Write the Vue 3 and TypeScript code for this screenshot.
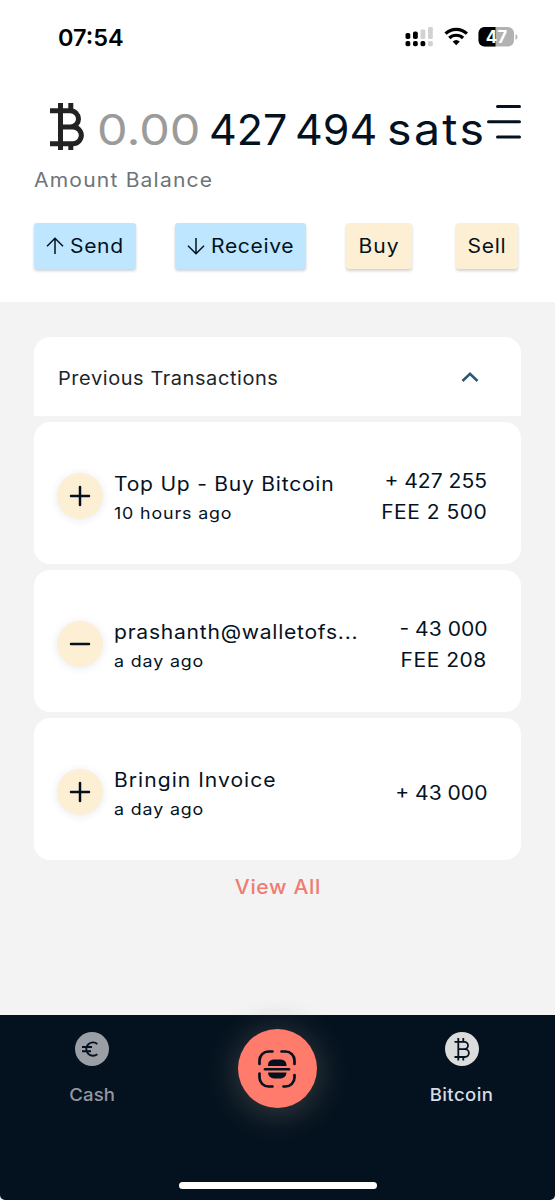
<script setup lang="ts">
interface Transaction {
  id: number
  kind: 'in' | 'out'
  title: string
  time: string
  amount: string
  fee?: string
}

const transactions: Transaction[] = [
  { id: 1, kind: 'in', title: 'Top Up - Buy Bitcoin', time: '10 hours ago', amount: '+ 427 255', fee: 'FEE 2 500' },
  { id: 2, kind: 'out', title: 'prashanth@walletofs...', time: 'a day ago', amount: '- 43 000', fee: 'FEE 208' },
  { id: 3, kind: 'in', title: 'Bringin Invoice', time: 'a day ago', amount: '+ 43 000' },
]
</script>

<template>
  <div class="screen">
    <header class="top">
      <div class="status">
        <span class="clock">07:54</span>
        <svg class="status-icons" width="114" height="24" viewBox="0 0 114 24">
          <g fill="#000">
            <rect x="0.5" y="8" width="4.8" height="6" rx="1.8" />
            <rect x="8" y="6.5" width="4.8" height="7.5" rx="1.8" />
            <rect x="0.5" y="16" width="4.8" height="5.3" rx="1.8" />
            <rect x="8" y="16" width="4.8" height="5.3" rx="1.8" />
            <rect x="15.5" y="16" width="4.8" height="5.3" rx="1.8" />
          </g>
          <g fill="#d2d2d2">
            <rect x="15.5" y="4.5" width="4.8" height="9.5" rx="1.2" />
            <rect x="23" y="2" width="4.8" height="12" rx="1.2" />
            <rect x="23" y="16" width="4.8" height="5.3" rx="1.2" />
          </g>
          <g fill="none" stroke="#000" stroke-width="3.2">
            <path d="M40.5 8.6a15.5 15.5 0 0 1 21.400 0" />
            <path d="M44.3 13a10 10 0 0 1 13.800 0" />
          </g>
          <path d="M51.200 20.200l-3.600-3.700a5.400 5.400 0 0 1 7.200 0z" fill="#000" />
          <rect x="73.500" y="2" width="35.500" height="19.500" rx="6" fill="#b2b2b2" />
          <path d="M79.500 2H90.500V21.500H79.500a6 6 0 0 1-6-6V8a6 6 0 0 1 6-6z" fill="#000" />
          <path d="M110.500 9.200q2 .8 2 2.800t-2 2.800z" fill="#b2b2b2" />
          <text x="91.500" y="17.700" text-anchor="middle" class="battery-text">47</text>
        </svg>
      </div>

      <div class="balance">
        <svg class="coin" width="36" height="48" viewBox="0 0 36 48" fill="none" stroke="#222" stroke-width="5">
          <path d="M1 7.800H21.400a8.100 8.100 0 0 1 0 16.200H11.500M21.400 24H24a8.350 8.350 0 0 1 0 16.700H1M11.500 7.800V40.700" />
          <path d="M11.500 0V8M21.800 0V8M11.500 41V47M21.800 41V47" />
        </svg>
        <div class="zeros"><span class="wide">0.00</span></div>
        <div class="n1">427</div>
        <div class="n2">494</div>
        <div class="unit"><span class="wide">sats</span></div>
        <svg class="menu" width="36" height="38" viewBox="0 0 36 38" stroke="#04121f" stroke-width="3" stroke-linecap="round">
          <path d="M11.500 2.500H33.500M2.500 17.800H33.500M11.500 33H33.500" />
        </svg>
      </div>
      <div class="caption"><span class="wide">Amount Balance</span></div>

      <div class="actions">
        <button class="btn blue send">
          <svg width="18" height="18" viewBox="0 0 18 18"><path d="M9 17V1.500M1 9.300L9 1.300L17 9.300" /></svg>
          <span class="wide">Send</span>
        </button>
        <button class="btn blue receive">
          <svg width="18" height="18" viewBox="0 0 18 18"><path d="M9 1V16.500M1 8.700L9 16.700L17 8.700" /></svg>
          <span class="wide">Receive</span>
        </button>
        <button class="btn cream buy"><span class="wide">Buy</span></button>
        <button class="btn cream sell"><span class="wide">Sell</span></button>
      </div>
    </header>

    <main class="content">
      <div class="list-head">
        <span class="wide">Previous Transactions</span>
        <svg width="18" height="12" viewBox="0 0 18 12" fill="none" stroke="#2f5877" stroke-width="2.600">
          <path d="M1.500 9L9 1.800L16.500 9" />
        </svg>
      </div>
      <article v-for="t in transactions" :key="t.id" class="card">
        <div class="badge">
          <svg width="22" height="22" viewBox="0 0 22 22" stroke="#04121f" stroke-width="2.500" stroke-linecap="round">
            <path :d="t.kind === 'in' ? 'M2 11H20M11 2V20' : 'M2 11H20'" />
          </svg>
        </div>
        <div class="info">
          <div class="title"><span class="wide">{{ t.title }}</span></div>
          <div class="time"><span class="wide">{{ t.time }}</span></div>
        </div>
        <div class="amounts">
          <div class="amount"><span class="wide">{{ t.amount }}</span></div>
          <div v-if="t.fee" class="fee"><span class="wide">{{ t.fee }}</span></div>
        </div>
      </article>
      <a class="view-all"><span class="wide">View All</span></a>
      <div class="glow"></div>
    </main>

    <nav class="nav">
      <div class="tab cash">
        <svg width="34" height="34" viewBox="0 0 34 34">
          <circle cx="17" cy="17" r="17" fill="#9a9fa6" />
          <path d="M22.300 12A6.700 6.700 0 1 0 22.300 22.200M7 15H17M7 19.200H16" fill="none" stroke="#04121f" stroke-width="1.900" />
        </svg>
        <span class="wide">Cash</span>
      </div>
      <div class="scan">
        <svg width="38" height="38" viewBox="0 0 38 38">
          <path d="M1.500 14V10.500a9 9 0 0 1 9-9H14.500M23.500 1.500H27.500a9 9 0 0 1 9 9V14M36.500 25V27.500a9 9 0 0 1-9 9H25.500M14.500 36.500H10.500a9 9 0 0 1-9-9V23.500" fill="none" stroke="#04121f" stroke-width="2.700" stroke-linecap="round" />
          <path d="M10 16V15a5.500 5.500 0 0 1 5.500-5.500H23a5.500 5.500 0 0 1 5.500 5.500V16zM10 22.500H28.500a6 6 0 0 1-6 6H16a6 6 0 0 1-6-6z" fill="#04121f" />
          <path d="M7 19.200H31" stroke="#04121f" stroke-width="2.600" stroke-linecap="round" />
        </svg>
      </div>
      <div class="tab bitcoin">
        <svg width="34" height="34" viewBox="0 0 34 34">
          <circle cx="17" cy="17" r="17" fill="#dcdcdc" />
          <path d="M9.500 9.800H19.300a3.700 3.700 0 0 1 0 7.400H13.300M19.300 17.200H20a3.900 3.900 0 0 1 0 7.800H9.500M13.300 9.800V25M13.300 6V10M18.300 6V10M13.300 25V28.500M18.300 25V28.500" fill="none" stroke="#04121f" stroke-width="1.800" />
        </svg>
        <span class="wide">Bitcoin</span>
      </div>
      <div class="home-bar"></div>
    </nav>
  </div>
</template>

<style>
body {
  margin: 0;
  background: #fff;
}
</style>

<style scoped>
.screen {
  width: 555px;
  height: 1200px;
  display: flex;
  flex-direction: column;
  overflow: hidden;
  background: #f3f3f3;
  color: #04121f;
  font-family: Inter, "Liberation Sans", sans-serif;
  white-space: nowrap;
}
.screen * {
  box-sizing: border-box;
}
svg {
  display: block;
  flex: none;
}
/* Extended letterforms: stretches a label horizontally from its left edge. */
.wide {
  display: inline-block;
  transform: scaleX(1.08);
  transform-origin: left center;
}
.top {
  height: 302px;
  flex: none;
  background: #fff;
}
.status {
  height: 74px;
  display: flex;
  align-items: center;
  justify-content: space-between;
  padding: 0 36px 0 58px;
}
.clock {
  color: #000;
  font-size: 23.5px;
  font-weight: 600;
}
.battery-text {
  font: 700 17px Inter, sans-serif;
  fill: #fff;
}
.balance {
  display: flex;
  height: 86px;
  padding: 29px 0 0 49px;
  font-size: 43px;
  line-height: 52px;
}
.zeros {
  width: 112px;
  padding-left: 12px;
  color: #9b9b9b;
}
.zeros .wide {
  transform: scaleX(1.13);
}
.n1 {
  width: 86px;
  padding-left: 12px;
}
.n2 {
  width: 92px;
  padding-left: 12px;
}
.unit {
  width: 99px;
  padding-left: 12px;
  letter-spacing: 2.2px;
}
.menu {
  margin: 1px 0 0 12px;
}
.caption {
  padding-left: 34px;
  height: 63px;
  line-height: 40px;
  font-size: 19.5px;
  letter-spacing: 1.1px;
  color: #6d7379;
}
.actions {
  display: flex;
  padding-left: 34px;
}
.btn {
  display: flex;
  align-items: center;
  justify-content: center;
  height: 46px;
  padding: 0;
  border: 0;
  border-radius: 3px;
  box-shadow: 0 2px 3px rgba(0, 0, 0, 0.18);
  font: 400 19.5px Inter, sans-serif;
  letter-spacing: 0.6px;
  color: #04121f;
}
.btn svg {
  margin-right: 6px;
  fill: none;
  stroke: #04121f;
  stroke-width: 1.5px;
}
.blue {
  justify-content: flex-start;
  padding-left: 12px;
  background: #bee6fe;
}
.cream {
  background: #fdefd3;
}
.cream .wide {
  transform-origin: center;
}
.send {
  width: 102px;
}
.receive {
  width: 131px;
  margin-left: 39px;
}
.buy {
  width: 66px;
  margin-left: 40px;
  letter-spacing: 1px;
}
.sell {
  width: 62px;
  margin-left: 44px;
}
.content {
  position: relative;
  flex: none;
  height: 713px;
  padding: 35px 34px 0;
  display: flex;
  flex-direction: column;
  gap: 6px;
  overflow: hidden;
}
.list-head {
  display: flex;
  align-items: center;
  justify-content: space-between;
  height: 79px;
  flex: none;
  padding: 2px 42px 0 24px;
  border-radius: 16px 16px 0 0;
  background: #fff;
  font-size: 18.5px;
  letter-spacing: 0.53px;
  color: #202429;
}
.card {
  display: flex;
  align-items: center;
  height: 142px;
  flex: none;
  padding: 0 34px 0 23px;
  border-radius: 16px;
  background: #fff;
}
.badge {
  display: flex;
  align-items: center;
  justify-content: center;
  width: 46px;
  height: 46px;
  margin-top: 6px;
  border-radius: 50%;
  background: #fdefd3;
  box-shadow: 0 1px 9px rgba(40, 50, 120, 0.1);
}
.info {
  flex: 1;
  margin: 10px 0 0 11px;
}
.title {
  font-size: 19.5px;
  line-height: 30px;
  letter-spacing: 0.7px;
}
.card:last-of-type .title {
  letter-spacing: 0.95px;
}
.time {
  font-size: 16.5px;
  line-height: 28px;
  letter-spacing: 0.8px;
}
.amounts {
  margin-top: 8px;
  font-size: 19.5px;
  line-height: 31px;
  text-align: right;
}
.amounts .wide {
  transform-origin: right center;
}
.amount {
  letter-spacing: 0;
}
.fee {
  letter-spacing: 0.45px;
}
.view-all {
  align-self: center;
  line-height: 43px;
  font-size: 19.5px;
  font-weight: 500;
  letter-spacing: 0.6px;
  color: #f07b70;
}
.view-all .wide,
.tab .wide {
  transform-origin: center;
}
.glow {
  position: absolute;
  left: 238px;
  top: 728px;
  width: 79px;
  height: 79px;
  border-radius: 50%;
  box-shadow: 0 0 32px rgba(40, 40, 50, 0.3);
}
.nav {
  position: relative;
  display: flex;
  justify-content: space-between;
  flex: 1;
  padding: 14px 43.5px 0 42.5px;
  background: #04121f;
  border-radius: 0 0 5px 5px;
}
.tab {
  display: flex;
  flex-direction: column;
  align-items: center;
  width: 99px;
  padding-top: 3px;
  font-size: 17.2px;
  font-weight: 500;
  letter-spacing: 0.4px;
}
.tab .wide {
  margin-top: 17px;
  line-height: 24px;
}
.cash {
  color: #9398a0;
  letter-spacing: 0.1px;
}
.bitcoin {
  color: #d6dce4;
}
.scan {
  display: flex;
  align-items: center;
  justify-content: center;
  width: 79px;
  height: 79px;
  border-radius: 50%;
  background: #ff7b6c;
  box-shadow: 0 4px 36px rgba(255, 220, 190, 0.24);
}
.home-bar {
  position: absolute;
  left: 179px;
  bottom: 11px;
  width: 198px;
  height: 7px;
  border-radius: 4px;
  background: #fff;
}
</style>
